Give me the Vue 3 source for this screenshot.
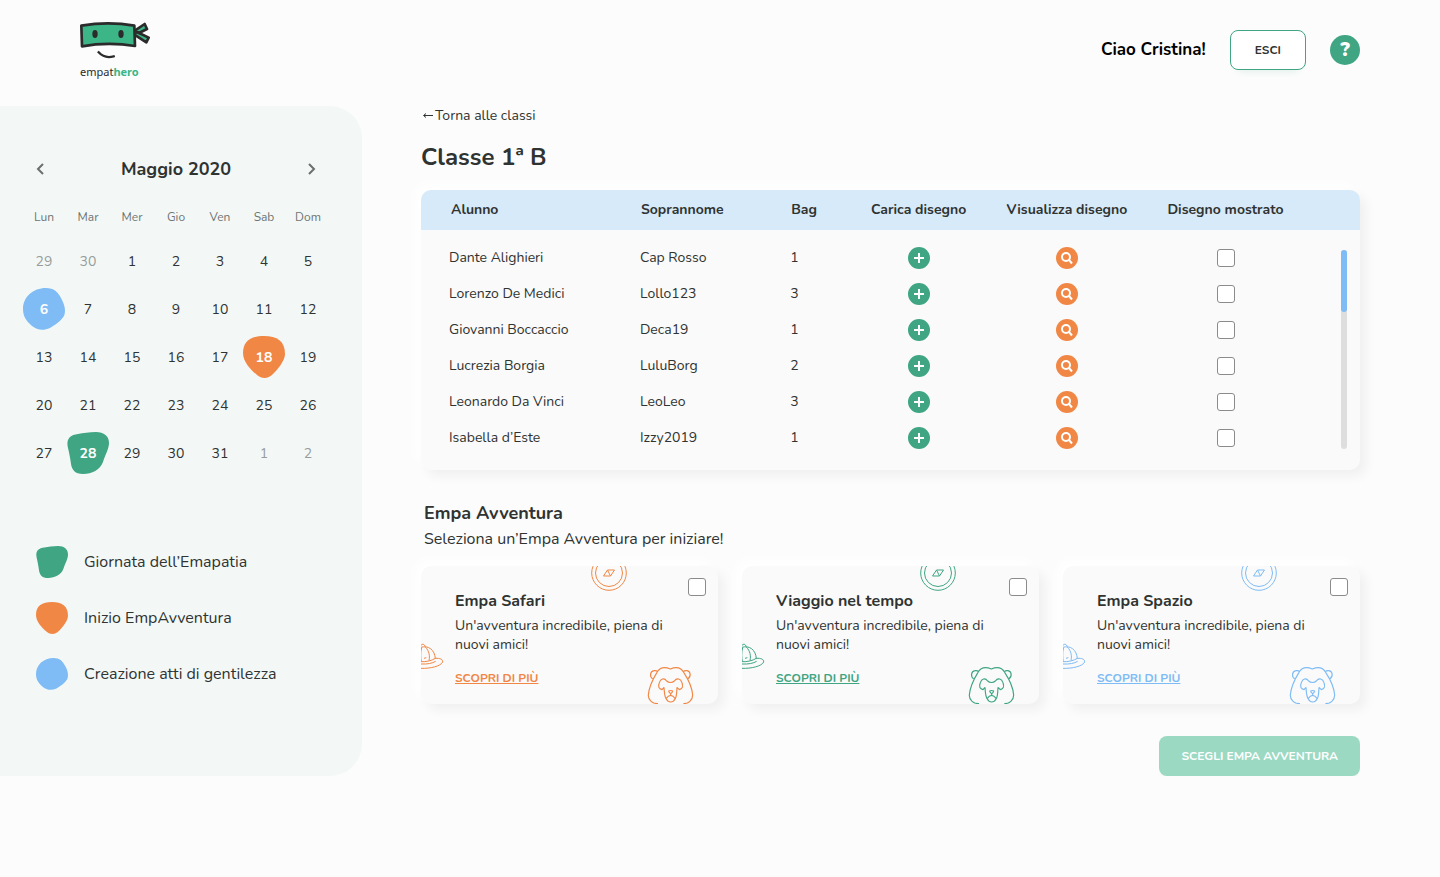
<script setup>
import { ref } from 'vue'

const blobs = {
  green: 'M11 2C16 1 22 0 29 0C37 0 42 4 42 11C42 17 38 23 36 30C33 38 25 42 16 42C8 42 5 38 4 32C3 25 2 20 1 16C-1 8 2 3 11 2Z',
  orange: 'M21 0C34 0 42 5 42 18C42 25 34 34 30 38C25 43 19 43 14 39C8 34 0 26 0 17C0 5 8 0 21 0Z',
  blue: 'M23 0C31 0 35 4 38 10C42 17 43 23 41 28C38 33 32 37 27 40C20 43 14 42 9 38C3 33 0 28 0 21C0 9 10 0 23 0Z',
}

const weekdays = ['Lun', 'Mar', 'Mer', 'Gio', 'Ven', 'Sab', 'Dom']
const marks = { 6: 'blue', 18: 'orange', 28: 'green' }
const days = [
  { n: 29, out: true },
  { n: 30, out: true },
  ...Array.from({ length: 31 }, (_, i) => ({ n: i + 1, mark: marks[i + 1] })),
  { n: 1, out: true },
  { n: 2, out: true },
]
const weeks = [0, 1, 2, 3, 4].map((w) => days.slice(w * 7, w * 7 + 7))

const legend = [
  { color: 'green', label: 'Giornata dell’Emapatia' },
  { color: 'orange', label: 'Inizio EmpAvventura' },
  { color: 'blue', label: 'Creazione atti di gentilezza' },
]

const students = ref([
  { name: 'Dante Alighieri', nick: 'Cap Rosso', bag: 1, shown: false },
  { name: 'Lorenzo De Medici', nick: 'Lollo123', bag: 3, shown: false },
  { name: 'Giovanni Boccaccio', nick: 'Deca19', bag: 1, shown: false },
  { name: 'Lucrezia Borgia', nick: 'LuluBorg', bag: 2, shown: false },
  { name: 'Leonardo Da Vinci', nick: 'LeoLeo', bag: 3, shown: false },
  { name: 'Isabella d’Este', nick: 'Izzy2019', bag: 1, shown: false },
])

const adventures = ref([
  { title: 'Empa Safari', color: 'orange', picked: false },
  { title: 'Viaggio nel tempo', color: 'green', picked: false },
  { title: 'Empa Spazio', color: 'blue', picked: false },
])
</script>

<template>
  <div class="page">
    <header class="topbar">
      <a class="logo" href="#" aria-label="empathero">
        <svg class="logo-mark" viewBox="30 18 210 120" aria-hidden="true">
          <path d="M190 50L224 27L231 42L207 54L236 68L229 82L192 58Z" fill="#3cb587" stroke="#2b2b2b" stroke-width="8" stroke-linejoin="round" />
          <path d="M34 32Q115 18 193 32L195 93Q115 80 36 94Z" fill="#3cb587" stroke="#2b2b2b" stroke-width="8" stroke-linejoin="round" />
          <path d="M196 52L212 53" stroke="#2b2b2b" stroke-width="9" />
          <ellipse cx="75" cy="57" rx="8" ry="12" fill="#2b2b2b" />
          <ellipse cx="153" cy="57" rx="8" ry="12" fill="#2b2b2b" />
          <path d="M86 112Q104 132 131 124" fill="none" stroke="#2b2b2b" stroke-width="7" stroke-linecap="square" />
        </svg>
        <span class="logo-text">empat<b>hero</b></span>
      </a>
      <div class="user">
        <span class="hello">Ciao Cristina!</span>
        <button class="exit" type="button">ESCI</button>
        <button class="help" type="button" aria-label="Aiuto">?</button>
      </div>
    </header>

    <div class="body">
      <aside class="side">
        <div class="month">
          <button type="button" aria-label="Mese precedente">
            <svg viewBox="0 0 16 16"><path d="M10 3L5 8L10 13" /></svg>
          </button>
          <h2>Maggio 2020</h2>
          <button type="button" aria-label="Mese successivo">
            <svg viewBox="0 0 16 16"><path d="M6 3L11 8L6 13" /></svg>
          </button>
        </div>
        <table class="calendar">
          <thead>
            <tr><th v-for="d in weekdays" :key="d">{{ d }}</th></tr>
          </thead>
          <tbody>
            <tr v-for="(week, w) in weeks" :key="w">
              <td v-for="(d, i) in week" :key="i" :class="{ out: d.out, marked: d.mark }">
                <svg v-if="d.mark" class="day-blob" :class="d.mark" viewBox="0 0 42 42" aria-hidden="true">
                  <path :d="blobs[d.mark]" fill="currentColor" />
                </svg>
                <span>{{ d.n }}</span>
              </td>
            </tr>
          </tbody>
        </table>
        <ul class="legend">
          <li v-for="l in legend" :key="l.color">
            <svg :class="l.color" viewBox="0 0 42 42" aria-hidden="true">
              <path :d="blobs[l.color]" fill="currentColor" />
            </svg>
            <span>{{ l.label }}</span>
          </li>
        </ul>
      </aside>

      <main class="main">
        <a class="back" href="#">
          <svg viewBox="0 0 14 10" aria-hidden="true"><path d="M12 4.500H3M5 2.500L2.500 4.500L5 6.500" /></svg>Torna alle classi
        </a>
        <h1>Classe 1ª B</h1>

        <div class="panel">
          <table class="students">
            <colgroup>
              <col class="c-name" /><col class="c-nick" /><col class="c-bag" /><col class="c-load" />
              <col class="c-view" /><col class="c-shown" /><col />
            </colgroup>
            <thead>
              <tr>
                <th>Alunno</th>
                <th>Soprannome</th>
                <th>Bag</th>
                <th class="mid">Carica disegno</th>
                <th class="mid view">Visualizza disegno</th>
                <th class="mid shown">Disegno mostrato</th>
                <th></th>
              </tr>
            </thead>
            <tbody>
              <tr v-for="s in students" :key="s.name">
                <td>{{ s.name }}</td>
                <td>{{ s.nick }}</td>
                <td>{{ s.bag }}</td>
                <td class="mid">
                  <button class="round add" type="button" :aria-label="'Carica disegno di ' + s.name">
                    <svg viewBox="0 0 22 22"><path d="M11 6V16M6 11H16" /></svg>
                  </button>
                </td>
                <td class="mid view">
                  <button class="round look" type="button" :aria-label="'Visualizza disegno di ' + s.name">
                    <svg viewBox="0 0 22 22"><circle cx="10" cy="10" r="4" /><path d="M13 13L16 16.500" /></svg>
                  </button>
                </td>
                <td class="mid shown">
                  <input v-model="s.shown" class="check" type="checkbox" :aria-label="'Disegno mostrato: ' + s.name" />
                </td>
                <td></td>
              </tr>
            </tbody>
          </table>
          <div class="track"><div class="thumb"></div></div>
        </div>

        <h2 class="section-title">Empa Avventura</h2>
        <p class="section-sub">Seleziona un’Empa Avventura per iniziare!</p>

        <div class="cards">
          <article v-for="a in adventures" :key="a.title" class="card" :class="a.color">
            <svg class="art compass" viewBox="0 0 36 36" aria-hidden="true">
              <circle cx="18" cy="18" r="17.300" /><circle cx="18" cy="18" r="13.500" />
              <path d="M12.500 21L16.500 15H23.500L19.500 21ZM16.500 15L19.500 21" />
            </svg>
            <svg class="art hat" viewBox="33 262 69 78" aria-hidden="true">
              <g stroke-width="3">
                <path d="M33 269Q40 261 46 272M33 275C54 268 75 282 76 310M46 274C58 287 60 300 57 315M35 276C31 290 32 305 34 318" />
                <path d="M33 318C48 319 65 315 76 308C90 307 99 311 98 319C92 332 60 339 33 338M33 325C52 326 67 323 77 317M42 308L49 306" />
              </g>
            </svg>
            <svg class="art bear" viewBox="711 333 141 114" aria-hidden="true">
              <g stroke-width="3.500">
                <path d="M744 446C728 446 714 436 715 420C717 396 728 373 741 352C749 338 762 334 781 342C800 334 813 338 821 352C835 373 846 396 848 420C848 436 835 446 820 446" />
                <path d="M728 371C718 364 720 349 732 347C737 346 741 348 743 350M834 371C844 364 842 349 831 347C826 346 822 348 820 350" />
                <path d="M762 397C763 410 763 424 769 432C775 444 789 444 795 432C801 424 800 410 801 397M762 397L756 404C748 402 742 396 748 383C752 371 762 367 770 378C776 384 787 384 793 378C801 367 812 371 816 383C821 396 816 402 808 404L801 397" />
                <path d="M776 408Q782 405 788 408Q788 412 782 416Q776 412 776 408ZM782 416V421M768 431Q775 421 782 421Q789 421 796 431" />
              </g>
            </svg>
            <input v-model="a.picked" class="check pick" type="checkbox" :aria-label="a.title" />
            <h3>{{ a.title }}</h3>
            <p>Un'avventura incredibile, piena di nuovi amici!</p>
            <a href="#">SCOPRI DI PIÙ</a>
          </article>
        </div>

        <button class="choose" type="button">SCEGLI EMPA AVVENTURA</button>
      </main>
    </div>
  </div>
</template>

<style>
body {
  background: #fcfcfc;
}
</style>

<style scoped>
.page {
  font-family: Nunito, Lato, sans-serif;
  font-size: 14px;
  line-height: 20px;
  color: #2f3331;
}
.page * {
  box-sizing: border-box;
}
h1, h2, h3, p, ul {
  margin: 0;
  padding: 0;
}
button {
  font: inherit;
  cursor: pointer;
}
.green { color: #3fa583; }
.orange { color: #f18745; }
.blue { color: #7fbcf5; }

.topbar {
  display: flex;
  justify-content: space-between;
  align-items: center;
  padding: 21px 80px 27px;
}
.logo {
  display: flex;
  flex-direction: column;
  gap: 2px;
  height: 58px;
  text-decoration: none;
}
.logo-mark {
  flex: none;
  width: 70px;
  height: 40px;
}
.logo-text {
  font: 11px/18px "Noto Sans", sans-serif;
  color: #2b2b2b;
}
.logo-text b {
  color: #3cb587;
}
.user {
  display: flex;
  align-items: center;
  gap: 24px;
}
.hello {
  font-size: 17px;
  font-weight: 700;
  color: #000;
}
.exit {
  height: 40px;
  padding: 0 24px;
  border: 1px solid #3fa583;
  border-radius: 8px;
  background: #fff;
  box-shadow: 0 8px 8px -8px rgba(63, 165, 131, 0.2);
  font-size: 12px;
  font-weight: 700;
  color: #2f3331;
}
.help {
  width: 30px;
  height: 30px;
  padding: 0;
  border: 0;
  border-radius: 50%;
  background: #3fa583;
  color: #fff;
  font-size: 20px;
  font-weight: 900;
}

.body {
  display: flex;
  align-items: flex-start;
}
.side {
  flex: 0 0 362px;
  padding: 50px 32px 86px 22px;
  border-radius: 0 32px 32px 0;
  background: #f3f8f7;
}
.month {
  display: flex;
  justify-content: space-between;
  align-items: center;
  padding: 0 11px;
}
.month button {
  display: flex;
  padding: 0;
  border: 0;
  background: none;
}
.month svg {
  width: 16px;
  height: 16px;
  fill: none;
  stroke: #6b706e;
  stroke-width: 2;
}
.month h2 {
  font-size: 18px;
  line-height: 26px;
}
.calendar {
  width: 100%;
  margin-top: 18px;
  border-collapse: collapse;
  table-layout: fixed;
  text-align: center;
}
.calendar th {
  height: 34px;
  padding: 0;
  font-size: 12px;
  font-weight: 400;
  color: #6f7573;
}
.calendar tbody::before {
  content: "";
  display: block;
  height: 4px;
}
.calendar td {
  position: relative;
  height: 48px;
  padding: 0;
}
.calendar .out {
  color: #989d9b;
}
.calendar .marked {
  color: #fff;
  font-weight: 700;
}
.calendar td span {
  position: relative;
}
.day-blob {
  position: absolute;
  top: 2px;
  left: 1px;
  width: 42px;
  height: 42px;
}
.legend {
  display: grid;
  gap: 24px;
  padding: 68px 14px 0;
  list-style: none;
  font-size: 16px;
}
.legend li {
  display: flex;
  align-items: center;
  gap: 16px;
}
.legend svg {
  width: 32px;
  height: 32px;
}

.main {
  flex: 1;
  display: flex;
  flex-direction: column;
  align-items: flex-start;
  min-width: 0;
  padding: 0 80px 0 59px;
}
.back {
  display: flex;
  align-items: center;
  color: inherit;
  text-decoration: none;
}
.back svg {
  width: 14px;
  height: 10px;
  fill: none;
  stroke: currentColor;
  stroke-width: 1;
}
h1 {
  margin-top: 15px;
  font-size: 24px;
  line-height: 32px;
}
.panel {
  position: relative;
  width: 100%;
  margin-top: 17px;
  padding-bottom: 14px;
  border-radius: 10px;
  background: #fafafa;
  box-shadow: 6px 6px 12px rgba(0, 0, 0, 0.05), -6px -6px 12px #fff;
}
.students {
  width: 100%;
  border-collapse: separate;
  border-spacing: 0;
  table-layout: fixed;
  text-align: left;
  white-space: nowrap;
}
.c-name { width: 23%; }
.c-nick { width: 16%; }
.c-bag { width: 6%; }
.c-load { width: 16%; }
.c-view { width: 16%; }
.c-shown { width: 18%; }
.students th {
  height: 40px;
  padding: 0 0 0 4px;
  background: #d7eafa;
  font-weight: 700;
}
.students th:first-child {
  padding-left: 30px;
  border-top-left-radius: 10px;
}
.students th:last-child {
  border-top-right-radius: 10px;
}
.students tbody::before {
  content: "";
  display: block;
  height: 10px;
}
.students td {
  height: 36px;
  padding: 0 0 0 3px;
}
.students td:first-child {
  padding-left: 28px;
}
.students .mid {
  padding: 0;
  text-align: center;
}
.students .view {
  padding-right: 4px;
}
.students .shown {
  padding-right: 6px;
}
.round {
  display: inline-flex;
  padding: 0;
  border: 0;
  border-radius: 50%;
  vertical-align: middle;
}
.round svg {
  width: 22px;
  height: 22px;
  fill: none;
  stroke: #fff;
  stroke-width: 2;
}
.add { background: #3fa583; }
.look { background: #f18745; }
.check {
  display: block;
  appearance: none;
  width: 18px;
  height: 18px;
  margin: 0 auto;
  border: 1px solid #8b8b8b;
  border-radius: 3px;
  background: #fff;
}
.check:checked {
  background: #3fa583;
}
.track {
  position: absolute;
  top: 60px;
  right: 13px;
  bottom: 21px;
  width: 6px;
  border-radius: 3px;
  background: #dedede;
}
.thumb {
  height: 62px;
  border-radius: 3px;
  background: #7fbcf5;
}

.section-title {
  margin: 30px 0 0 3px;
  font-size: 18px;
  line-height: 26px;
}
.section-sub {
  margin-left: 3px;
  font-size: 16px;
  line-height: 26px;
}
.cards {
  display: grid;
  grid-template-columns: repeat(3, 1fr);
  gap: 24px;
  width: 100%;
  margin-top: 14px;
}
.card {
  position: relative;
  display: flex;
  flex-direction: column;
  align-items: flex-start;
  padding: 24px 34px 16px;
  border-radius: 10px;
  background: #fafafa;
  box-shadow: 6px 6px 12px rgba(0, 0, 0, 0.05), -6px -6px 12px #fff;
}
.card h3 {
  font-size: 16px;
  line-height: 22px;
  color: #2f3331;
}
.card p {
  max-width: 216px;
  margin-top: 4px;
  line-height: 19px;
  color: #2f3331;
}
.card a {
  margin-top: 14px;
  font-size: 12px;
  font-weight: 700;
  color: inherit;
}
.art {
  position: absolute;
  fill: none;
  stroke: currentColor;
  stroke-width: 1;
  stroke-linejoin: round;
}
.compass {
  top: -11px;
  left: 178px;
  width: 36px;
  height: 36px;
  clip-path: inset(11px 0 0 0);
}
.card.orange .compass {
  left: 170px;
}
.hat {
  top: 77px;
  left: 0;
  width: 23px;
  height: 26px;
}
.bear {
  right: 24px;
  bottom: 0;
  width: 47px;
  height: 38px;
}
.pick {
  position: absolute;
  top: 12px;
  right: 12px;
}
.choose {
  align-self: flex-end;
  height: 40px;
  margin-top: 32px;
  padding: 0 22px;
  border: 0;
  border-radius: 8px;
  background: #9bd9c3;
  box-shadow: 0 12px 8px -8px rgba(63, 181, 135, 0.3);
  color: #fff;
  font-size: 12px;
  font-weight: 700;
}
</style>
